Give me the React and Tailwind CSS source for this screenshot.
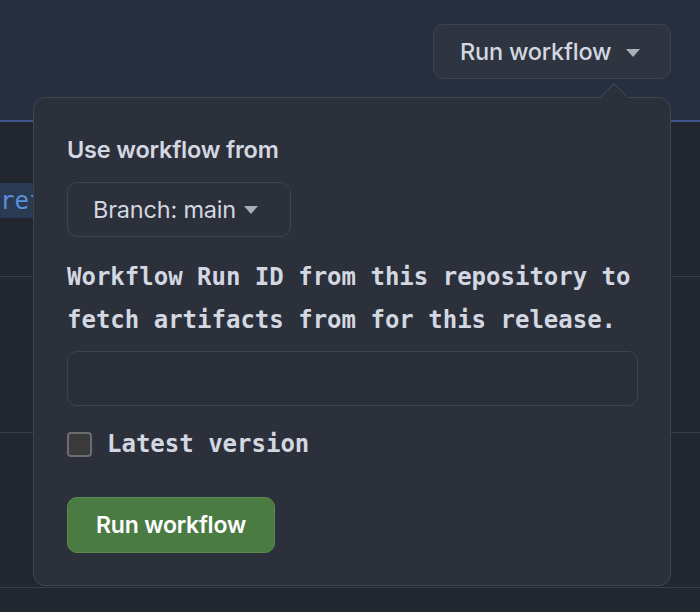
const Caret = ({ className }) => (
  <svg className={className} width="14" height="8" viewBox="0 0 14 8" fill="currentColor">
    <path d="M0 0h14L7 8z" />
  </svg>
);

const App = () => {
  return (
    <div
      className="relative w-[700px] h-[612px] overflow-hidden bg-[#22262e]"
      style={{ fontFamily: "Inter, 'Noto Sans', sans-serif" }}
    >
      {/* HEADER */}
      <div className="h-[120px] bg-[#252f3f] flex justify-end items-start pt-[24px] pr-[29px]">
        <button className="h-[55px] w-[238px] flex items-center pl-[26px] gap-[15px] rounded-[10px] border border-[#3d4451] bg-[#2f3540] text-[23.5px] tracking-[-0.2px] font-medium text-[#d3d7e1]">
          Run workflow
          <Caret className="text-[#a9aeb8] mt-[2px]" />
        </button>
      </div>
      <div className="h-[2px] bg-[#3c5788]" />

      {/* ROWS BEHIND */}
      <div className="h-[155px] border-b border-[#393e47] pt-[61px]">
        <div className="h-[35px] w-[60px] bg-[#2a3a52] flex items-center">
          <span
            className="text-[24px] text-[#5d8fdc]"
            style={{ fontFamily: "'DejaVu Sans Mono', monospace" }}
          >
            ref
          </span>
        </div>
      </div>
      <div className="h-[156px] border-b border-[#393e47]" />
      <div className="h-[155px] border-b border-[#393e47]" />
      <div className="flex-1 bg-[#22252c]" />

      {/* POPOVER */}
      <div className="absolute left-[33px] top-[97px] w-[638px] h-[489px] rounded-[12px] border border-[#3f4550] bg-[#2b303a] pl-[33px] pt-[37px]">
        <div className="absolute -top-[11px] left-[570px] w-[20px] h-[20px] rotate-45 bg-[#2b303a] border-l border-t border-[#3f4550]" />
        <p className="relative text-[23.5px] tracking-[-0.2px] font-semibold text-[#d3d7e1] leading-[30px]">
          Use workflow from
        </p>
        <button className="mt-[17px] h-[55px] w-[224px] flex items-center pl-[25px] gap-[8px] rounded-[10px] border border-[#3d4451] bg-[#2b303a] text-[23.5px] tracking-[-0.2px] text-[#d3d7e1]">
          Branch: main
          <Caret className="text-[#a9aeb8]" />
        </button>
        <p
          className="mt-[19px] text-[24px] font-bold leading-[43px] text-[#d3d7e1]"
          style={{ fontFamily: "'DejaVu Sans Mono', monospace" }}
        >
          Workflow Run ID from this repository to
          <br />
          fetch artifacts from for this release.
        </p>
        <div className="mt-[9px] h-[55px] w-[571px] rounded-[10px] border border-[#3d4451] bg-[#292e37]" />
        <label className="mt-[24px] flex items-center gap-[15px]">
          <span className="w-[25px] h-[25px] rounded-[4px] border-2 border-[#6b6d70] bg-[#3a3a3b]" />
          <span
            className="text-[24px] font-bold text-[#d3d7e1] leading-[28px]"
            style={{ fontFamily: "'DejaVu Sans Mono', monospace" }}
          >
            Latest version
          </span>
        </label>
        <button className="mt-[39px] h-[56px] w-[208px] rounded-[10px] border border-[#5a8c52] bg-[#4a7b43] text-[23px] tracking-[-0.2px] font-semibold text-white">
          Run workflow
        </button>
      </div>
    </div>
  );
};

export default App;
